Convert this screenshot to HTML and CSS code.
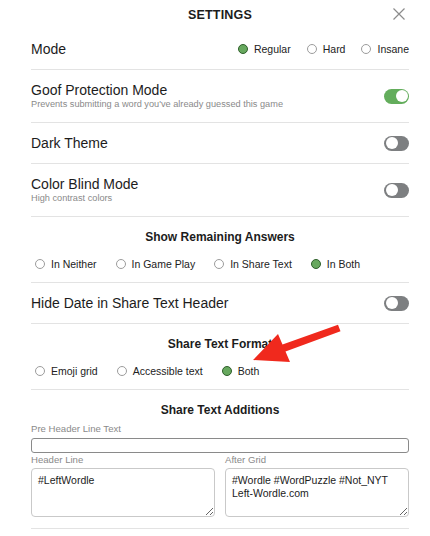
FILE: index.html
```html
<!DOCTYPE html>
<html lang="en-US">

<head>
    <meta charset="utf-8">
    <title>Settings</title>
    <link rel="stylesheet" href="styles.css">
</head>

<body>
    <div class="settings">
        <header class="title-bar">
            <h1>SETTINGS</h1>
            <button type="button" class="close" aria-label="Close">
                <svg width="12" height="12" viewBox="0 0 12 12">
                    <path d="M0.5 0.5 L11.5 11.5 M11.5 0.5 L0.5 11.5" stroke="#8c8c8c" stroke-width="1.2" fill="none"/>
                </svg>
            </button>
        </header>

        <div class="row">
            <div class="row-title">Mode</div>
            <div class="radios mode-radios">
                <label class="option"><span class="radio checked"></span>Regular</label>
                <label class="option"><span class="radio"></span>Hard</label>
                <label class="option"><span class="radio"></span>Insane</label>
            </div>
        </div>

        <div class="row">
            <div>
                <div class="row-title">Goof Protection Mode</div>
                <div class="row-sub">Prevents submitting a word you've already guessed this game</div>
            </div>
            <span class="toggle on"></span>
        </div>

        <div class="row">
            <div class="row-title">Dark Theme</div>
            <span class="toggle"></span>
        </div>

        <div class="row">
            <div>
                <div class="row-title">Color Blind Mode</div>
                <div class="row-sub">High contrast colors</div>
            </div>
            <span class="toggle"></span>
        </div>

        <div class="section">
            <h2>Show Remaining Answers</h2>
            <div class="radios section-radios">
                <label class="option"><span class="radio"></span>In Neither</label>
                <label class="option"><span class="radio"></span>In Game Play</label>
                <label class="option"><span class="radio"></span>In Share Text</label>
                <label class="option"><span class="radio checked"></span>In Both</label>
            </div>
        </div>

        <div class="row">
            <div class="row-title">Hide Date in Share Text Header</div>
            <span class="toggle"></span>
        </div>

        <div class="section">
            <h2>Share Text Format</h2>
            <div class="radios section-radios">
                <label class="option"><span class="radio"></span>Emoji grid</label>
                <label class="option"><span class="radio"></span>Accessible text</label>
                <label class="option"><span class="radio checked"></span>Both</label>
            </div>
        </div>

        <div class="section additions">
            <h2>Share Text Additions</h2>
            <div class="field-label first">Pre Header Line Text</div>
            <input type="text" class="line-input">
            <div class="pair">
                <div>
                    <div class="field-label">Header Line</div>
                    <textarea>#LeftWordle</textarea>
                </div>
                <div>
                    <div class="field-label">After Grid</div>
                    <textarea>#Wordle #WordPuzzle #Not_NYT
Left-Wordle.com</textarea>
                </div>
            </div>
        </div>
    </div>

    <!-- annotation arrow -->
    <svg class="arrow" width="430" height="536" viewBox="0 0 430 536">
        <polygon points="338,324.7 282.5,344.5 278,334 253,360 290,362 285.5,351.5 340.5,331.3" fill="#f0291d"/>
    </svg>
</body>

</html>
```

FILE: styles.css
```css
html {
    background: #fff;
}

body {
    margin: 0;
    padding: 0 21px 0 31px;
    font-family: "Liberation Sans", Arial, sans-serif;
    color: #1c1c1c;
    background: #fff;
}

.title-bar {
    display: grid;
    grid-template-columns: 1fr auto 1fr;
    align-items: center;
    height: 29px;
}

.title-bar h1 {
    grid-column: 2;
    margin: 0;
    font-size: 12.5px;
    font-weight: bold;
    letter-spacing: 0.2px;
}

.close {
    grid-column: 3;
    justify-self: end;
    margin: 0 4px 2px 0;
    padding: 0;
    width: 12px;
    height: 12px;
    border: none;
    background: none;
    display: flex;
}

.row {
    display: flex;
    align-items: center;
    justify-content: space-between;
    padding: 12px 0;
    border-bottom: 1px solid #e3e3e3;
}

.row-title {
    font-size: 14px;
    line-height: 16px;
}

.row-sub {
    font-size: 9.2px;
    line-height: 12px;
    color: #8a8a8a;
}

.radios {
    display: flex;
    align-items: center;
    font-size: 10.5px;
    line-height: 14px;
    color: #222;
}

.mode-radios {
    gap: 16px;
}

.section-radios {
    gap: 19px;
    margin-top: 13px;
    padding-left: 4px;
}

.option {
    display: inline-flex;
    align-items: center;
    gap: 6px;
}

.radio {
    box-sizing: border-box;
    width: 10px;
    height: 10px;
    border-radius: 50%;
    border: 1px solid #9c9c9c;
    background: #fff;
}

.radio.checked {
    border: 1.5px solid #2f5f2b;
    background: #67a85e;
}

.toggle {
    position: relative;
    flex: none;
    width: 25px;
    height: 15px;
    border-radius: 8px;
    background: #7d7f81;
}

.toggle::after {
    content: "";
    position: absolute;
    top: 1.5px;
    left: 1.5px;
    width: 12px;
    height: 12px;
    border-radius: 50%;
    background: #fff;
}

.toggle.on {
    background: #63ad5c;
}

.toggle.on::after {
    left: 11.5px;
}

.section {
    padding: 13px 0 11px;
    border-bottom: 1px solid #e3e3e3;
}

.section h2 {
    margin: 0;
    text-align: center;
    font-size: 12px;
    line-height: 14px;
    font-weight: bold;
}

.additions {
    padding-bottom: 11px;
}

.field-label {
    font-size: 9.6px;
    line-height: 11px;
    color: #8a8a8a;
    margin-bottom: 3px;
}

.field-label.first {
    margin-top: 6px;
    margin-bottom: 4px;
}

.line-input {
    display: block;
    box-sizing: border-box;
    width: 100%;
    height: 15px;
    margin: 0 0 1px;
    padding: 0 4px;
    border: 1px solid #8a8a8a;
    border-radius: 3px;
}

.pair {
    display: grid;
    grid-template-columns: 1fr 1fr;
    gap: 10px;
}

.pair textarea {
    display: block;
    box-sizing: border-box;
    width: 100%;
    height: 49px;
    margin: 0;
    padding: 5px 6px;
    border: 1px solid #c9c9c9;
    border-radius: 4px;
    font-family: "Liberation Sans", Arial, sans-serif;
    font-size: 10.5px;
    line-height: 13px;
    color: #1c1c1c;
    resize: both;
}

.arrow {
    position: absolute;
    top: 0;
    left: 0;
    pointer-events: none;
}
```
